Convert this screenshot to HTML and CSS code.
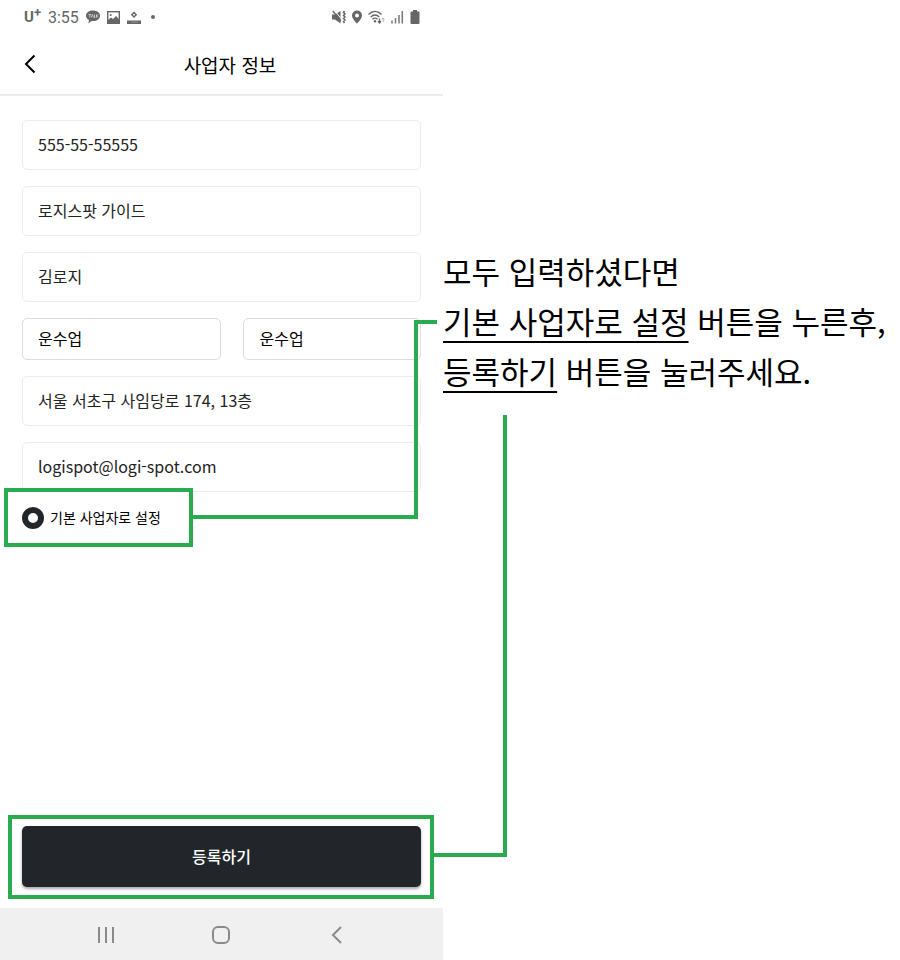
FILE: index.html
```
<!DOCTYPE html>
<html lang="ko">
<head>
    <meta charset="UTF-8">
    <meta name="viewport" content="width=device-width, initial-scale=1.0">
    <title>사업자 정보</title>
    <link rel="stylesheet" href="styles.css">
</head>
<body>
    <div class="guide">
        <div class="phone">
            <div class="status-bar">
                <div class="status-left">
                    <span class="carrier">U<sup>+</sup></span>
                    <span class="time">3:55</span>
                    <svg width="14" height="14" viewBox="0 0 14 14">
                        <path d="M7 .5C3 .5 0 2.600 0 5.600c0 2.200 1.200 3.600 3 4.500L2.300 13.500 5.600 11c5 .5 8.400-1.800 8.400-5.200C14 2.600 11 .5 7 .5z" fill="#666"/>
                        <path d="M2.500 4.500h2.600M3.800 4.500v3M5.300 7.500l1.100-3 1 3M8.500 4.500v3h1M10.500 4.500v3M12 4.500l-1.400 1.500L12 7.500" fill="none" stroke="#ddd" stroke-width=".8"/>
                    </svg>
                    <svg width="13" height="13" viewBox="0 0 13 13">
                        <rect x=".7" y=".7" width="11.600" height="11.600" fill="#fff" stroke="#666" stroke-width="1.400"/>
                        <path d="M1 12V9l3-2.500 2 1.500 3-3 3.300 3.500V12H1z" fill="#666"/>
                        <circle cx="3.700" cy="4" r="1" fill="#666"/>
                    </svg>
                    <svg width="14" height="14" viewBox="0 0 14 14">
                        <path d="M7 2.500 9.200 4.700 7 7 4.800 4.700z" fill="none" stroke="#666" stroke-width="1.400"/>
                        <rect y="10.500" width="14" height="3.500" fill="#666"/>
                        <path d="M4 12.200h7" stroke="#aaa" stroke-width=".6"/>
                    </svg>
                    <span class="dot"></span>
                </div>
                <div class="status-right">
                    <svg width="14" height="14" viewBox="0 0 14 14">
                        <path d="M0 4.500h3L8.500 1v12.500L3 9.500H0z" fill="#666"/>
                        <path d="M2.500 .5l7 8.500" stroke="#fff" stroke-width="1"/>
                        <path d="M.8 1l8 10" stroke="#666" stroke-width="1.400"/>
                        <path d="M12.500 1l-1 1.500L13 4l-1.500 1.500L13 7l-1.500 1.500L13 10l-1.500 1.500 1 1.500" fill="none" stroke="#666" stroke-width="1.500"/>
                    </svg>
                    <svg width="10" height="14" viewBox="0 0 10 14">
                        <path fill-rule="evenodd" d="M5 .5a5 5 0 0 0-5 5C0 9 5 13.500 5 13.500S10 9 10 5.500a5 5 0 0 0-5-5zm0 3a2 2 0 1 1 0 4 2 2 0 0 1 0-4z" fill="#666"/>
                    </svg>
                    <svg width="17" height="14" viewBox="0 0 17 14">
                        <g fill="none" stroke="#666" stroke-width="1.300">
                            <path d="M.5 4.500c4-4 9-4 13 0M2.700 7c3-2.800 5.700-2.800 8.600 0M4.500 9.300c1.700-1.600 3.300-1.600 5 0"/>
                            <path d="M11.500 8.500V13M10 11.300l1.500 1.700 1.500-1.700"/>
                        </g>
                        <circle cx="7" cy="11.300" r="1.200" fill="#666"/>
                        <path d="M15.200 12V8M13.900 9.500l1.300-1.500 1.300 1.500" fill="none" stroke="#aaa" stroke-width=".8"/>
                    </svg>
                    <svg width="13" height="14" viewBox="0 0 13 14">
                        <path d="M1 13.500v-3M4.500 13.500v-5.500M8 13.500V5M11.300 13.500V1" stroke="#777" stroke-width="1.500"/>
                    </svg>
                    <svg width="10" height="14" viewBox="0 0 10 14">
                        <path d="M3 0h4v1.500h1.500a1 1 0 0 1 1 1V13a1 1 0 0 1-1 1h-7a1 1 0 0 1-1-1V2.500a1 1 0 0 1 1-1H3z" fill="#666"/>
                    </svg>
                </div>
            </div>

            <header class="header">
                <button type="button" aria-label="뒤로">
                    <svg width="12" height="20" viewBox="0 0 12 20">
                        <path d="M10.500 1.500 2 10l8.500 8.500" fill="none" stroke="#000" stroke-width="2"/>
                    </svg>
                </button>
                <h1>사업자 정보</h1>
            </header>

            <form class="form">
                <input class="field" type="text" aria-label="사업자 번호" value="555-55-55555">
                <input class="field" type="text" aria-label="상호" value="로지스팟 가이드">
                <input class="field" type="text" aria-label="대표자" value="김로지">
                <div class="field-row">
                    <input class="field short" type="text" aria-label="업태" value="운수업">
                    <input class="field short" type="text" aria-label="업종" value="운수업">
                </div>
                <input class="field" type="text" aria-label="주소" value="서울 서초구 사임당로 174, 13층">
                <input class="field" type="email" aria-label="이메일" value="logispot@logi-spot.com">
                <div class="default-row">
                    <input type="radio" id="default" name="default" checked>
                    <label for="default">기본 사업자로 설정</label>
                    <span class="highlight"></span>
                    <span class="line-default"></span>
                </div>
                <div class="submit-row">
                    <button type="submit" class="submit">등록하기</button>
                    <span class="highlight"></span>
                    <span class="line-submit"></span>
                </div>
            </form>

            <nav class="nav-bar">
                <button type="button" aria-label="최근 앱">
                    <svg width="18" height="18" viewBox="0 0 18 18">
                        <path d="M2 1v16M9 1v16M16 1v16" stroke="#8a8a8a" stroke-width="2"/>
                    </svg>
                </button>
                <button type="button" aria-label="홈">
                    <svg width="18" height="18" viewBox="0 0 18 18">
                        <rect x="1" y="1" width="16" height="16" rx="5" fill="none" stroke="#8a8a8a" stroke-width="2"/>
                    </svg>
                </button>
                <button type="button" aria-label="뒤로">
                    <svg width="18" height="18" viewBox="0 0 18 18">
                        <path d="M13 1 5 9l8 8" fill="none" stroke="#8a8a8a" stroke-width="2"/>
                    </svg>
                </button>
            </nav>
        </div>

        <p class="note">
            모두 입력하셨다면<br>
            <u>기본 사업자로 설정</u> 버튼을 누른후,<br>
            <u>등록하기</u> 버튼을 눌러주세요.
        </p>
    </div>
</body>
</html>
```
FILE: styles.css
```
* {
    box-sizing: border-box;
}
body {
    margin: 0;
    background: #fff;
    color: #000;
    font-family: "Noto Sans CJK KR", sans-serif;
}
button {
    padding: 0;
    border: none;
    background: none;
    font-family: inherit;
    cursor: pointer;
}
svg {
    display: block;
}
.guide {
    display: grid;
    grid-template-columns: 443fr 457fr;
    min-height: 100vh;
}
.phone {
    display: flex;
    flex-direction: column;
    min-width: 0;
}

/* status bar */
.status-bar {
    display: flex;
    justify-content: space-between;
    align-items: center;
    height: 34px;
    padding: 0 23px 0 24px;
    color: #666;
    font-family: Roboto, sans-serif;
}
.status-left,
.status-right {
    display: flex;
    align-items: center;
    gap: 7px;
}
.status-right {
    gap: 6px;
}
.carrier {
    display: flex;
    font-size: 15px;
    font-weight: 700;
    line-height: 20px;
}
.carrier sup {
    font-size: 13px;
    line-height: 12px;
}
.time {
    font-size: 16px;
}
.dot {
    width: 4px;
    height: 4px;
    margin-left: 3px;
    border-radius: 50%;
    background: #666;
}

/* title */
.header {
    display: grid;
    grid-template-columns: 20px 1fr;
    align-items: center;
    height: 62px;
    padding: 0 27px 0 24px;
    border-bottom: 2px solid #ececec;
}
.header h1 {
    margin: 0;
    font-size: 19px;
    font-weight: 400;
    text-align: center;
}

/* form */
.form {
    flex: 1;
    display: flex;
    flex-direction: column;
    gap: 16px;
    padding: 24px 22px 21px;
}
.field {
    width: 100%;
    min-width: 0;
    height: 50px;
    padding: 0 15px 2px;
    border: 1px solid #ececec;
    border-radius: 5px;
    background: #fff;
    color: #222;
    font-family: inherit;
    font-size: 16px;
}
.field-row {
    display: grid;
    grid-template-columns: 200fr 178fr;
    gap: 22px;
}
.field.short {
    height: 42px;
    border-color: #ddd;
    color: #000;
}
.default-row {
    position: relative;
    display: flex;
    align-items: center;
    gap: 6px;
    height: 20px;
    font-size: 14px;
}
.default-row label {
    padding-bottom: 2px;
}
.default-row input {
    appearance: none;
    width: 22px;
    height: 22px;
    margin: 0;
    border: 6px solid #22262a;
    border-radius: 50%;
    background: #fff;
}
.submit-row {
    position: relative;
    margin-top: auto;
}
.submit {
    display: block;
    width: 100%;
    height: 61px;
    padding-bottom: 2px;
    border-radius: 5px;
    background: #22262a;
    box-shadow: 0 2px 3px rgba(0, 0, 0, 0.35);
    color: #fff;
    font-size: 16px;
    font-weight: 500;
}

/* green callouts */
.highlight {
    position: absolute;
    border: 4px solid #2bab50;
    pointer-events: none;
}
.default-row .highlight {
    top: -20px;
    left: -18px;
    width: 189px;
    height: 59px;
}
.submit-row .highlight {
    inset: -11px -13px -12px -14px;
}
.line-default {
    position: absolute;
    left: 171px;
    right: 3px;
    bottom: 9px;
    height: 199px;
    border: solid #2bab50;
    border-width: 0 4px 4px 0;
    pointer-events: none;
}
.line-default::after {
    content: "";
    position: absolute;
    top: 0;
    left: 100%;
    width: 23px;
    height: 4px;
    background: #2bab50;
}
.line-submit {
    position: absolute;
    left: calc(100% + 13px);
    bottom: 30px;
    width: 73px;
    height: 442px;
    border: solid #2bab50;
    border-width: 0 4px 4px 0;
    pointer-events: none;
}

/* system buttons */
.nav-bar {
    display: flex;
    justify-content: space-around;
    align-items: center;
    height: 52px;
    padding: 2px 48px 0;
    background: #f0f0f0;
}

/* instructions */
.note {
    margin: 246px 0 0;
    font-size: 31px;
    line-height: 50px;
    white-space: nowrap;
}
.note u {
    text-decoration-thickness: 2px;
    text-underline-offset: 7px;
}
```
